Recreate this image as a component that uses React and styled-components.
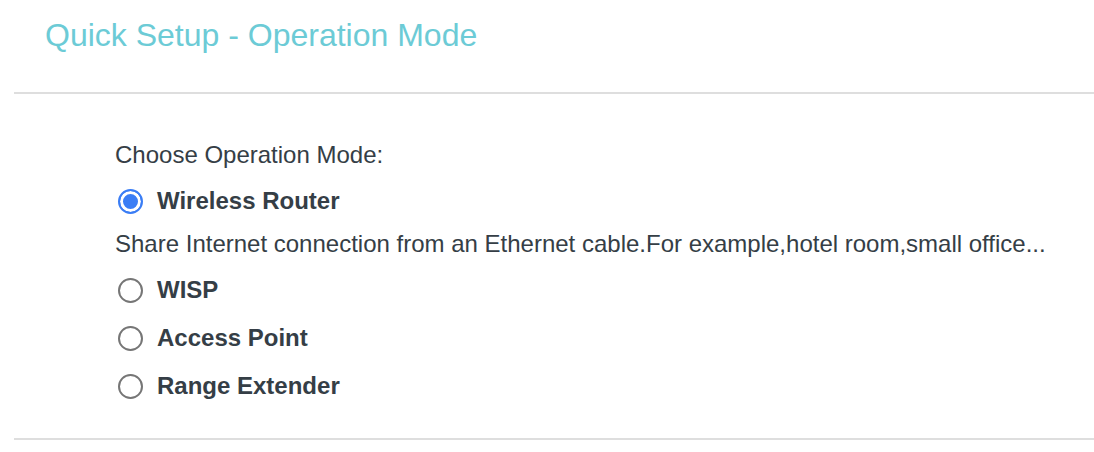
import React, { useState } from 'react';
import styled, { createGlobalStyle } from 'styled-components';

const GlobalStyle = createGlobalStyle`
  body {
    margin: 0;
    background: #fff;
    font-family: "Liberation Sans", Arial, sans-serif;
  }
`;

const modes = [
  { id: 'router', label: 'Wireless Router', desc: 'Share Internet connection from an Ethernet cable.For example,hotel room,small office...' },
  { id: 'wisp', label: 'WISP' },
  { id: 'ap', label: 'Access Point' },
  { id: 'extender', label: 'Range Extender' },
];

const App = () => {
  const [mode, setMode] = useState('router');

  return (
    <>
      <GlobalStyle />
      <Page>
        <Header>
          <Title>Quick Setup - Operation Mode</Title>
        </Header>
        <Divider />
        <Body>
          <Prompt>Choose Operation Mode:</Prompt>
          {modes.map((m) => (
            <React.Fragment key={m.id}>
              <Option onClick={() => setMode(m.id)}>
                <Radio checked={mode === m.id} />
                <OptionLabel>{m.label}</OptionLabel>
              </Option>
              {m.desc && mode === m.id && <Desc>{m.desc}</Desc>}
            </React.Fragment>
          ))}
        </Body>
        <Divider />
      </Page>
    </>
  );
};

const Page = styled.main`
  width: 1094px;
  height: 452px;
  overflow: hidden;
`;

const Header = styled.header`
  height: 92px;
  padding-left: 45px;
  box-sizing: border-box;
  padding-top: 16px;
`;

const Title = styled.h1`
  margin: 0;
  font-weight: normal;
  font-size: 32px;
  line-height: 38px;
  color: #6ccbd6;
`;

const Divider = styled.hr`
  margin: 0 0 0 14px;
  border: 0;
  height: 2px;
  background: #dedede;
`;

const Body = styled.section`
  padding: 39px 0 28px 115px;
  display: flex;
  flex-direction: column;
  color: #353e46;
`;

const Prompt = styled.div`
  font-size: 24px;
  line-height: 44px;
`;

const Option = styled.label`
  display: flex;
  align-items: center;
  gap: 14px;
  height: 48px;
  cursor: pointer;
`;

const Radio = styled.span`
  width: 25px;
  height: 25px;
  box-sizing: border-box;
  margin-left: 3px;
  border-radius: 50%;
  border: 2px solid ${(props) => (props.checked ? '#3a7df5' : '#767676')};
  background: ${(props) => (props.checked ? '#3a7df5' : '#fff')};
  box-shadow: ${(props) => (props.checked ? 'inset 0 0 0 3px #fff' : 'none')};
`;

const OptionLabel = styled.span`
  font-size: 24px;
  font-weight: bold;
`;

const Desc = styled.div`
  margin-top: -3px;
  font-size: 24px;
  line-height: 44px;
`;

export default App;
